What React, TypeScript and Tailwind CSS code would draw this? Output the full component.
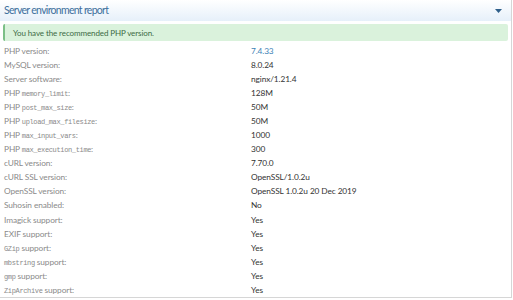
import React from "react";

const mono = "font-['Liberation_Mono',monospace] text-[7px] tracking-[-0.35px]";

type Row = { label: React.ReactNode; value: string; link?: boolean };

const rows: Row[] = [
  { label: "PHP version:", value: "7.4.33", link: true },
  { label: "MySQL version:", value: "8.0.24" },
  { label: "Server software:", value: "nginx/1.21.4" },
  { label: <>PHP <span className={mono}>memory_limit</span>:</>, value: "128M" },
  { label: <>PHP <span className={mono}>post_max_size</span>:</>, value: "50M" },
  { label: <>PHP <span className={mono}>upload_max_filesize</span>:</>, value: "50M" },
  { label: <>PHP <span className={mono}>max_input_vars</span>:</>, value: "1000" },
  { label: <>PHP <span className={mono}>max_execution_time</span>:</>, value: "300" },
  { label: "cURL version:", value: "7.70.0" },
  { label: "cURL SSL version:", value: "OpenSSL/1.0.2u" },
  { label: "OpenSSL version:", value: "OpenSSL 1.0.2u 20 Dec 2019" },
  { label: "Suhosin enabled:", value: "No" },
  { label: "Imagick support:", value: "Yes" },
  { label: "EXIF support:", value: "Yes" },
  { label: <><span className={mono}>GZip</span> support:</>, value: "Yes" },
  { label: <><span className={mono}>mbstring</span> support:</>, value: "Yes" },
  { label: <><span className={mono}>gmp</span> support:</>, value: "Yes" },
  { label: <><span className={mono}>ZipArchive</span> support:</>, value: "Yes" },
];

export default function App() {
  return (
    <div className="w-[513px] h-[300px] bg-white overflow-hidden font-['Lato',sans-serif]">
      <div className="w-[512px] h-[298px] border-r border-b border-[#d6d6d6] flex flex-col">
        <div className="h-[21px] flex items-center justify-between pl-[4px] pr-[9px] bg-gradient-to-b from-[#ffffff] to-[#e6f0fa]">
          <span className="text-[10.5px] tracking-[-0.7px] text-[#3d6f9c] leading-none">Server environment report</span>
          <svg width="7" height="4" viewBox="0 0 7 4"><path d="M0 0 L7 0 L3.5 4 Z" fill="#2f5f8a" /></svg>
        </div>
        <div className="mx-[3px] mt-[3px] h-[17px] flex items-center bg-[#daf2dc] border-l-2 border-[#7bbf86] rounded-[2px] pl-[8px]">
          <span className="text-[8px] tracking-[-0.1px] text-[#3c6b44] leading-none">You have the recommended PHP version.</span>
        </div>
        <div className="flex flex-col pt-[3px]">
          {rows.map((r, i) => (
            <div key={i} className={`h-[14px] flex items-center text-[8.3px] tracking-[-0.1px] leading-none ${i === 12 ? "mt-[1px]" : ""}`}>
              <div className="w-[251px] pl-[4px] text-[#8a8a8a]">{r.label}</div>
              <div className={r.link ? "text-[#3d7fb5]" : "text-[#333333]"}>{r.value}</div>
            </div>
          ))}
        </div>
      </div>
    </div>
  );
}
